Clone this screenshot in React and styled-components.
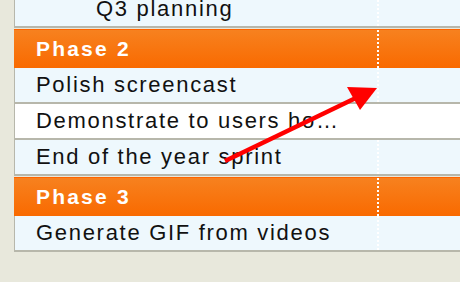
import styled, { createGlobalStyle } from 'styled-components';

const GlobalStyle = createGlobalStyle`
  html, body {
    margin: 0;
    padding: 0;
    background: #e8e8dc;
    overflow: hidden;
  }
`;

const groups = [
  { title: null, rows: [{ text: 'Q3 planning', indent: true }] },
  {
    title: 'Phase 2',
    rows: [
      { text: 'Polish screencast' },
      { text: 'Demonstrate to users ho…', white: true },
      { text: 'End of the year sprint' },
    ],
  },
  { title: 'Phase 3', rows: [{ text: 'Generate GIF from videos' }] },
];

export default function App() {
  return (
    <Page>
      <GlobalStyle />
      <Table>
        {groups.map((group, gi) => (
          <Group key={gi}>
            {group.title && (
              <Header>
                <HeaderCell>{group.title}</HeaderCell>
                <HeaderCell />
              </Header>
            )}
            {group.rows.map((row, ri) => (
              <Row key={ri} white={row.white}>
                <Cell indent={row.indent}>{row.text}</Cell>
                <Cell />
              </Row>
            ))}
          </Group>
        ))}
      </Table>
      <Arrow width="460" height="282" viewBox="0 0 460 282">
        <line x1="225" y1="161" x2="362" y2="95" stroke="#ff0000" strokeWidth="4.5" />
        <polygon points="377,88 347,87 360,110" fill="#ff0000" />
      </Arrow>
    </Page>
  );
}

const Page = styled.div`
  position: relative;
  width: 460px;
  height: 282px;
  overflow: hidden;
  font-family: "Liberation Sans", Arial, sans-serif;
`;

const Table = styled.div`
  margin-left: 14px;
  margin-top: -8px;
  width: 500px;
`;

const Group = styled.div`
  border-bottom: 2px solid #b7b7ab;
  margin-bottom: 1px;
`;

const Header = styled.div`
  display: grid;
  grid-template-columns: 365px 1fr;
  height: 38px;
  border-top: 1px solid #ff6400;
  background: linear-gradient(#f7811f, #f96a00);
`;

const HeaderCell = styled.div`
  display: flex;
  align-items: center;
  padding-left: 22px;
  color: #fff;
  font-weight: bold;
  font-size: 21px;
  letter-spacing: 2.2px;
  &:first-child {
    border-right: 2px dotted #fff;
  }
`;

const Row = styled.div`
  display: grid;
  grid-template-columns: 364px 1fr;
  height: 34px;
  border-left: 1px solid #b7b7ab;
  background: ${props => props.white ? '#ffffff' : '#eef8fd'};
  & + & {
    border-top: 2px solid #b7b7ab;
  }
`;

const Cell = styled.div`
  display: flex;
  align-items: center;
  padding-left: ${props => props.indent ? '81px' : '21px'};
  font-size: 22px;
  letter-spacing: 1.7px;
  color: #111;
  white-space: nowrap;
  overflow: hidden;
  &:first-child {
    border-right: 2px dotted #fff;
  }
`;

const Arrow = styled.svg`
  position: absolute;
  left: 0;
  top: 0;
  pointer-events: none;
`;
